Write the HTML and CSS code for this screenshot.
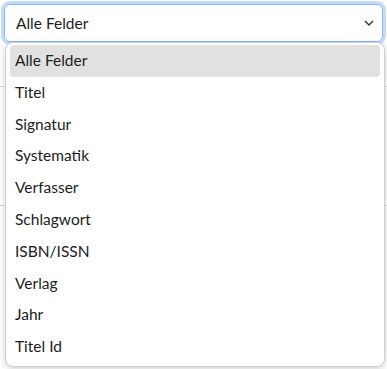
FILE: index.html
```html
<!DOCTYPE html>
<html lang="de">
<head>
    <meta charset="UTF-8">
    <meta name="viewport" content="width=device-width, initial-scale=1.0">
    <title>Suche</title>
    <link rel="stylesheet" href="styles.css">
</head>
<body>
    <div class="search">
        <div class="select">
            <span class="select-value">Alle Felder</span>
            <svg class="chevron" width="10" height="6" viewBox="0 0 10 6">
                <path d="M1 1 L5 5 L9 1" fill="none" stroke="#333" stroke-width="1.4"/>
            </svg>
        </div>
        <div class="backdrop">
            <div class="field"></div>
            <div class="field"></div>
        </div>
        <ul class="options">
            <li class="active">Alle Felder</li>
            <li>Titel</li>
            <li>Signatur</li>
            <li>Systematik</li>
            <li>Verfasser</li>
            <li>Schlagwort</li>
            <li>ISBN/ISSN</li>
            <li>Verlag</li>
            <li>Jahr</li>
            <li>Titel Id</li>
        </ul>
    </div>
</body>
</html>
```

FILE: styles.css
```css
html, body {
    height: 100%;
}
body {
    margin: 0;
    min-height: 369px;
    font-family: Lato, "Noto Sans", sans-serif;
    color: #1c1c1c;
    background: #fff;
}
.search {
    position: relative;
    padding: 4px;
    width: 379px;
    min-height: 361px;
}
.select {
    height: 36px;
    border: 1px solid #86b7fe;
    border-radius: 6px;
    box-shadow: 0 0 0 3px #c6dafa;
    display: flex;
    align-items: center;
    justify-content: space-between;
    padding: 0 6px 0 11px;
    font-size: 15.5px;
}
.chevron {
    margin-right: 2px;
}
.backdrop {
    padding-top: 10px;
}
.field {
    height: 84px;
    border-top: 1px solid #d6d6d6;
    margin: 34px -4px 0;
}
.options {
    position: absolute;
    top: 42px;
    left: 5px;
    width: 370px;
    margin: 0;
    padding: 2px 4px 3px;
    list-style: none;
    background: #fff;
    border: 1px solid #cfcfcf;
    border-radius: 8px;
    box-shadow: 0 2px 6px rgba(0, 0, 0, 0.18);
}
.options li {
    height: 31.8px;
    line-height: 31px;
    padding-left: 5px;
    font-size: 15.5px;
    border-radius: 4px;
}
.options li.active {
    background: #e1e1e1;
}
```
